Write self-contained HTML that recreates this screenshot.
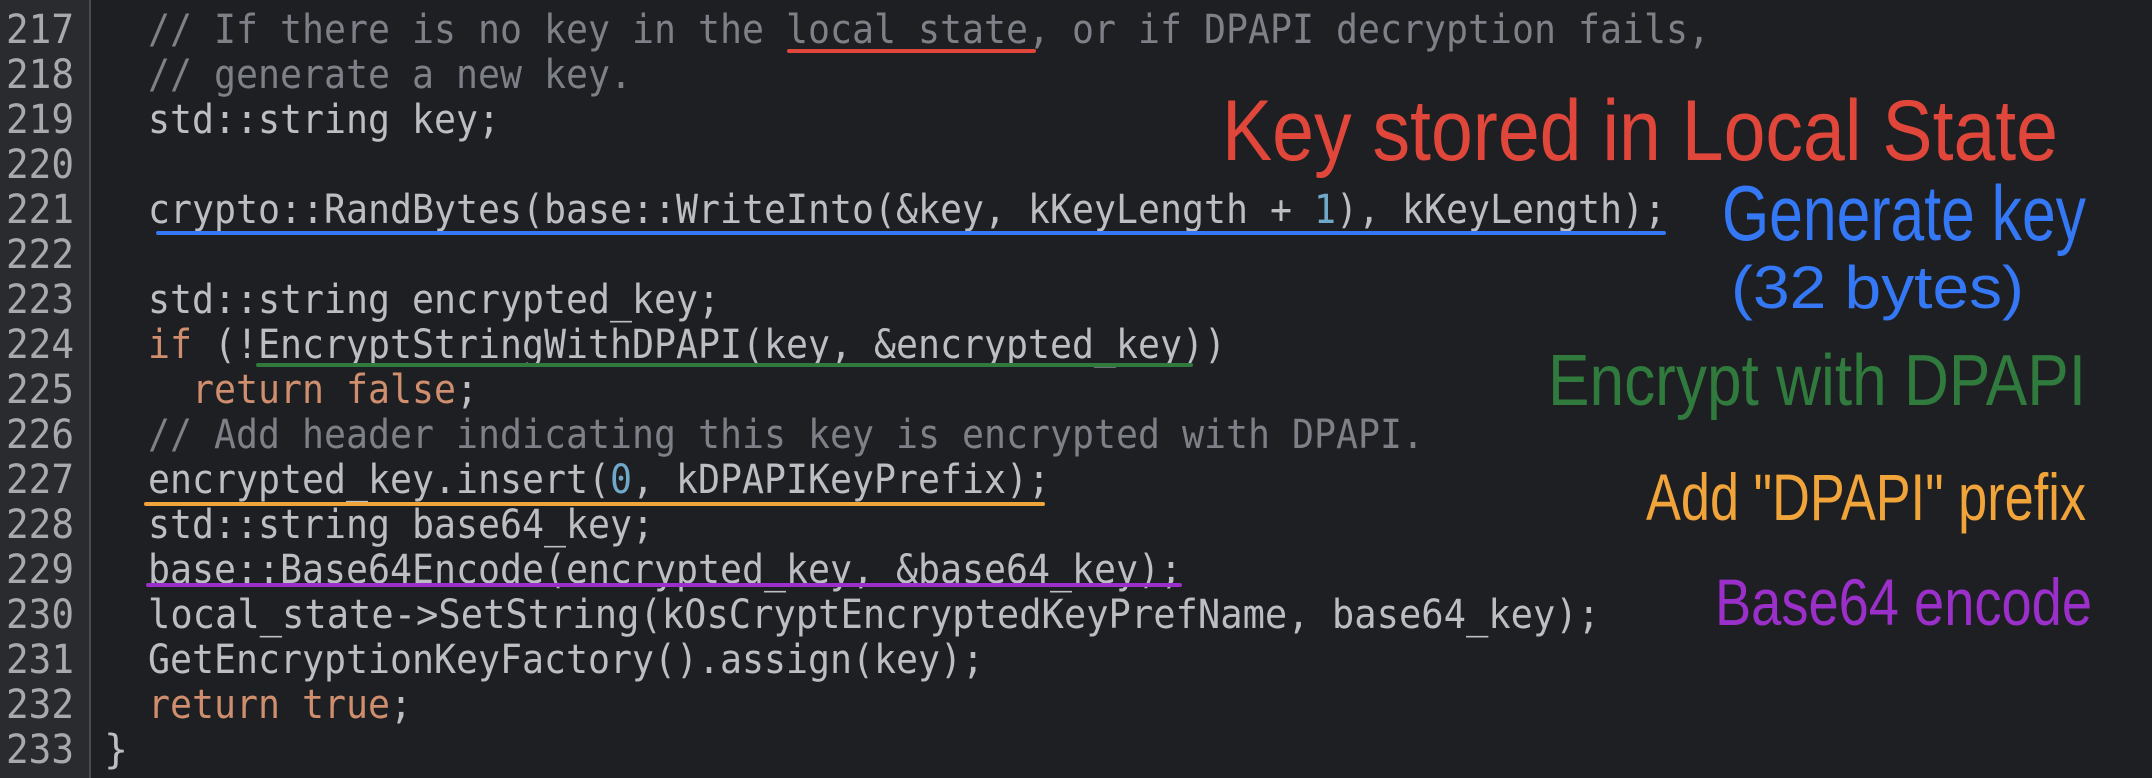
<!DOCTYPE html>
<html><head><meta charset="utf-8"><style>
html,body{margin:0;padding:0;background:#1e1f22;width:2152px;height:778px;overflow:hidden}
svg{display:block}
.c{font-family:"DejaVu Sans Mono","Liberation Mono",monospace;font-size:40px;fill:#bcbec4}
.n{font-family:"DejaVu Sans Mono","Liberation Mono",monospace;font-size:40px;fill:#a8a9ad}
.cm{fill:#7d8087}.kw{fill:#cf8e6d}.num{fill:#6fa8c8}
.h{font-family:"Liberation Sans",sans-serif;font-weight:normal}
</style></head><body>
<svg width="2152" height="778" xmlns="http://www.w3.org/2000/svg">
<rect width="2152" height="778" fill="#1e1f22"/>
<rect width="90" height="778" fill="#2a2b2e"/>
<rect x="89" width="2" height="778" fill="#4a4b4f"/>
<g class="n" text-anchor="end">
<text x="74" y="43" textLength="68" lengthAdjust="spacingAndGlyphs">217</text><text x="74" y="88" textLength="68" lengthAdjust="spacingAndGlyphs">218</text><text x="74" y="133" textLength="68" lengthAdjust="spacingAndGlyphs">219</text><text x="74" y="178" textLength="68" lengthAdjust="spacingAndGlyphs">220</text><text x="74" y="223" textLength="68" lengthAdjust="spacingAndGlyphs">221</text><text x="74" y="268" textLength="68" lengthAdjust="spacingAndGlyphs">222</text><text x="74" y="313" textLength="68" lengthAdjust="spacingAndGlyphs">223</text><text x="74" y="358" textLength="68" lengthAdjust="spacingAndGlyphs">224</text><text x="74" y="403" textLength="68" lengthAdjust="spacingAndGlyphs">225</text><text x="74" y="448" textLength="68" lengthAdjust="spacingAndGlyphs">226</text><text x="74" y="493" textLength="68" lengthAdjust="spacingAndGlyphs">227</text><text x="74" y="538" textLength="68" lengthAdjust="spacingAndGlyphs">228</text><text x="74" y="583" textLength="68" lengthAdjust="spacingAndGlyphs">229</text><text x="74" y="628" textLength="68" lengthAdjust="spacingAndGlyphs">230</text><text x="74" y="673" textLength="68" lengthAdjust="spacingAndGlyphs">231</text><text x="74" y="718" textLength="68" lengthAdjust="spacingAndGlyphs">232</text><text x="74" y="763" textLength="68" lengthAdjust="spacingAndGlyphs">233</text>
</g>
<g class="c">
<text x="148" y="43" class="cm" textLength="1562" lengthAdjust="spacingAndGlyphs">// If there is no key in the local state, or if DPAPI decryption fails,</text>
<text x="148" y="88" class="cm" textLength="484" lengthAdjust="spacingAndGlyphs">// generate a new key.</text>
<text x="148" y="133" textLength="352" lengthAdjust="spacingAndGlyphs">std::string key;</text>
<text x="148" y="223" textLength="1518" lengthAdjust="spacingAndGlyphs">crypto::RandBytes(base::WriteInto(&amp;key, kKeyLength + <tspan class="num">1</tspan>), kKeyLength);</text>
<text x="148" y="313" textLength="572" lengthAdjust="spacingAndGlyphs">std::string encrypted_key;</text>
<text x="148" y="358" textLength="1078" lengthAdjust="spacingAndGlyphs"><tspan class="kw">if</tspan> (!EncryptStringWithDPAPI(key, &amp;encrypted_key))</text>
<text x="192" y="403" textLength="286" lengthAdjust="spacingAndGlyphs"><tspan class="kw">return false</tspan>;</text>
<text x="148" y="448" class="cm" textLength="1276" lengthAdjust="spacingAndGlyphs">// Add header indicating this key is encrypted with DPAPI.</text>
<text x="148" y="493" textLength="902" lengthAdjust="spacingAndGlyphs">encrypted_key.insert(<tspan class="num">0</tspan>, kDPAPIKeyPrefix);</text>
<text x="148" y="538" textLength="506" lengthAdjust="spacingAndGlyphs">std::string base64_key;</text>
<text x="148" y="583" textLength="1034" lengthAdjust="spacingAndGlyphs">base::Base64Encode(encrypted_key, &amp;base64_key);</text>
<text x="148" y="628" textLength="1452" lengthAdjust="spacingAndGlyphs">local_state-&gt;SetString(kOsCryptEncryptedKeyPrefName, base64_key);</text>
<text x="148" y="673" textLength="836" lengthAdjust="spacingAndGlyphs">GetEncryptionKeyFactory().assign(key);</text>
<text x="148" y="718" textLength="264" lengthAdjust="spacingAndGlyphs"><tspan class="kw">return true</tspan>;</text>
<text x="104" y="763">}</text>
</g>
<g stroke-linecap="round" stroke-width="4" fill="none">
<line x1="789" y1="51" x2="1034" y2="51" stroke="#e0473a"/>
<line x1="158" y1="233" x2="1664" y2="233" stroke="#3478f6"/>
<line x1="258" y1="365" x2="1191" y2="365" stroke="#2f7a3c"/>
<line x1="146" y1="504" x2="1043" y2="504" stroke="#f0a43a"/>
<line x1="148" y1="585" x2="1180" y2="585" stroke="#9b2fc9"/>
</g>
<g class="h">
<text x="1222" y="160" font-size="86" fill="#e0473a" textLength="836" lengthAdjust="spacingAndGlyphs">Key stored in Local State</text>
<text x="1722" y="240" font-size="78" fill="#3478f6" textLength="364" lengthAdjust="spacingAndGlyphs">Generate key</text>
<text x="1731" y="308" font-size="60" fill="#3478f6" textLength="293" lengthAdjust="spacingAndGlyphs">(32 bytes)</text>
<text x="1548" y="405" font-size="72" fill="#2f7a3c" textLength="538" lengthAdjust="spacingAndGlyphs">Encrypt with DPAPI</text>
<text x="1646" y="520" font-size="66" fill="#f0a43a" textLength="440" lengthAdjust="spacingAndGlyphs">Add "DPAPI" prefix</text>
<text x="1715" y="625" font-size="66" fill="#9b2fc9" textLength="377" lengthAdjust="spacingAndGlyphs">Base64 encode</text>
</g>
</svg>
</body></html>
